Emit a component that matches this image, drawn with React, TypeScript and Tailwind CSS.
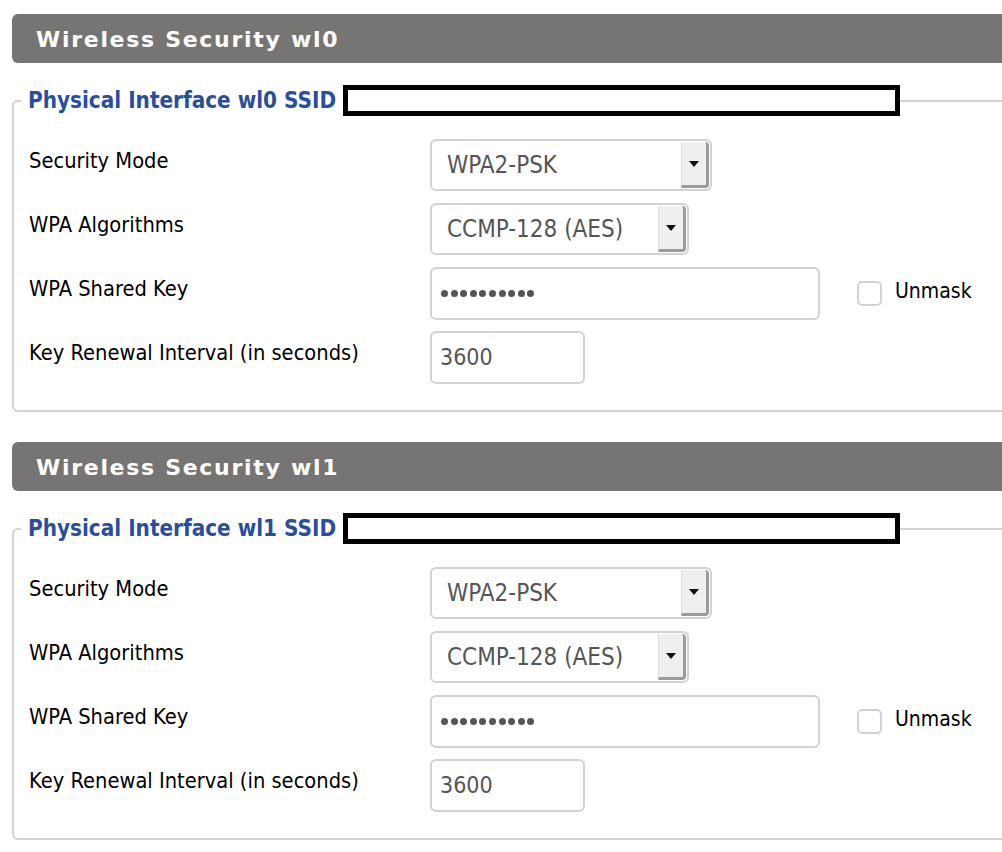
import React from "react";

const labelFont = { fontFamily: '"DejaVu Sans Condensed", "DejaVu Sans", sans-serif' };

function Arrow() {
  return (
    <div className="self-stretch my-[1px] mr-[1px] w-[28px] bg-[#efefef] border-l border-l-[#dcdcdc] border-r-[3px] border-r-[#9a9a9a] border-b-[3px] border-b-[#9a9a9a] rounded-r-[4px] flex items-center justify-center">
      <svg width="10" height="6" viewBox="0 0 10 6">
        <path d="M0 0 L10 0 L5 6 Z" fill="#111" />
      </svg>
    </div>
  );
}

function Select({ value, w }: { value: string; w: string }) {
  return (
    <div className={`${w} h-[52px] border-2 border-[#d2d2d2] rounded-[6px] flex items-center bg-white`}>
      <span className="pl-[15px] flex-1 text-[24px] text-[#555]">{value}</span>
      <Arrow />
    </div>
  );
}

function Row({ label, children }: { label: string; children: React.ReactNode }) {
  return (
    <div className="flex items-center h-[52px]">
      <div className="w-[401px] pb-[7px] text-[21.7px] text-black">{label}</div>
      {children}
    </div>
  );
}

function Section({ n }: { n: string }) {
  return (
    <div className="mb-[30px]">
      <div
        className="w-[1010px] h-[49px] bg-[#777573] rounded-l-[6px] flex items-center pl-[24px] pt-[2px] text-white font-bold text-[22px] tracking-[1.7px]"
        style={{ fontFamily: '"DejaVu Sans", Verdana, sans-serif' }}
      >
        Wireless Security {n}
      </div>
      <fieldset className="mt-[22px] w-[1010px] border-2 border-[#d2d2d2] rounded-[6px] pl-[15px] pb-[27px] pt-[23px]">
        <legend className="ml-[-8px] pl-[7px] h-[31px] flex items-center">
          <span
            className="font-bold text-[22.3px] leading-[31px] text-[#2a4e9e]"
            style={{ fontFamily: '"DejaVu Sans Condensed", "DejaVu Sans", sans-serif' }}
          >
            Physical Interface {n} SSID
          </span>
          <span className="ml-[7px] w-[557px] h-[31px] border-[5px] border-black bg-white" />
        </legend>
        <div className="flex flex-col gap-[12px]" style={labelFont}>
          <Row label="Security Mode">
            <Select value="WPA2-PSK" w="w-[282px]" />
          </Row>
          <Row label="WPA Algorithms">
            <Select value="CCMP-128 (AES)" w="w-[259px]" />
          </Row>
          <Row label="WPA Shared Key">
            <div className="w-[390px] h-[53px] border-2 border-[#d2d2d2] rounded-[6px] flex items-center pl-[9px] gap-[2.6px]">
              {Array.from({ length: 10 }).map((_, i) => (
                <span key={i} className="w-[7px] h-[7px] rounded-full bg-[#555]" />
              ))}
            </div>
            <div className="ml-[37px] w-[25px] h-[25px] border-2 border-[#d2d2d2] rounded-[5px] bg-white" />
            <span className="ml-[13px] pb-[2px] text-[21px] text-black">Unmask</span>
          </Row>
          <Row label="Key Renewal Interval (in seconds)">
            <div className="w-[155px] h-[53px] border-2 border-[#d2d2d2] rounded-[6px] flex items-center pl-[8px] text-[23px] text-[#555]">
              3600
            </div>
          </Row>
        </div>
      </fieldset>
    </div>
  );
}

export default function App() {
  return (
    <div className="w-[1002px] h-[852px] overflow-hidden bg-white pt-[14px] pl-[12px]">
      <Section n="wl0" />
      <Section n="wl1" />
    </div>
  );
}
